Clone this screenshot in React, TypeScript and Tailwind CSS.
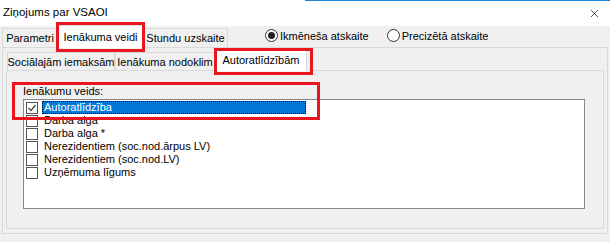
import { X } from "lucide-react"

const items = [
  "Autoratlīdzība",
  "Darba alga",
  "Darba alga *",
  "Nerezidentiem (soc.nod.ārpus LV)",
  "Nerezidentiem (soc.nod.LV)",
  "Uzņēmuma līgums",
]

function Checkbox({ checked }: { checked?: boolean }) {
  return (
    <div className="flex h-[12px] w-[12px] shrink-0 items-center justify-center border border-[#555] bg-white">
      {checked && (
        <svg width="10" height="10" viewBox="0 0 10 10">
          <path d="M1.5 5 L4 7.5 L8.5 2" fill="none" stroke="#444" strokeWidth="1.2" />
        </svg>
      )}
    </div>
  )
}

function Radio({ checked, label }: { checked?: boolean; label: string }) {
  return (
    <div className="flex items-center gap-[2px]">
      <div className="flex h-[13px] w-[13px] items-center justify-center rounded-full border border-[#333] bg-white">
        {checked && <div className="h-[7px] w-[7px] rounded-full bg-[#222]" />}
      </div>
      <span>{label}</span>
    </div>
  )
}

export default function App() {
  return (
    <div className="relative h-[242px] w-[610px] overflow-hidden whitespace-nowrap bg-[#f0f0f0] font-['Liberation_Sans',sans-serif] text-[11px] text-black">
      {/* Title bar */}
      <div className="relative flex h-[26px] items-center justify-between bg-white pl-[3px] pr-[9px]">
        <div className="absolute right-0 top-0 h-px w-[305px] bg-[#1883d7]" />
        <span className="text-[11.5px]">Ziņojums par VSAOI</span>
        <X size={13} strokeWidth={1.2} />
      </div>

      {/* Outer tabs + radio buttons */}
      <div className="relative z-10 flex h-[22px] items-end pl-[2px]">
        <div className="flex h-[20px] w-[56px] items-center justify-center border border-b-0 border-[#d9d9d9]">
          Parametri
        </div>
        <div className="flex h-[23px] w-[85px] items-center justify-center border border-b-0 border-[#d9d9d9] bg-white">
          Ienākuma veidi
        </div>
        <div className="flex h-[20px] w-[85px] items-center justify-center border border-b-0 border-[#d9d9d9]">
          Stundu uzskaite
        </div>
        <div className="mb-[4px] ml-[37px] flex items-center gap-[18px]">
          <Radio checked label="Ikmēneša atskaite" />
          <Radio label="Precizētā atskaite" />
        </div>
      </div>

      {/* Outer tab panel */}
      <div className="mx-[2px] -mt-px h-[187px] border border-[#d9d9d9] pl-[3px] pr-[3px]">
        <div className="relative z-10 flex h-[23px] items-end pl-[1px]">
          <div className="flex h-[19px] w-[108px] items-center justify-center border border-b-0 border-[#d9d9d9]">
            Sociālajām iemaksām
          </div>
          <div className="flex h-[19px] w-[100px] items-center justify-center border border-b-0 border-[#d9d9d9]">
            Ienākuma nodoklim
          </div>
          <div className="flex h-[22px] w-[92px] items-center justify-center border border-b-0 border-[#d9d9d9] bg-white">
            Autoratlīdzībām
          </div>
        </div>

        {/* Inner tab panel */}
        <div className="-mt-px h-[159px] border border-[#d9d9d9] pl-[16px] pt-[14px]">
          <div className="h-[14px] leading-[12px]">Ienākumu veids:</div>
          <div className="h-[110px] w-[562px] border border-[#828790] bg-white pl-[2px] pt-[1px]">
            {items.map((item, i) => (
              <div key={item} className="flex h-[13px] items-center gap-[4px]">
                <Checkbox checked={i === 0} />
                <span
                  className={
                    i === 0
                      ? "flex h-[13px] w-[264px] items-center border border-dotted border-black bg-[#0078d7] pl-[1px] text-white"
                      : "pl-[2px]"
                  }
                >
                  {item}
                </span>
              </div>
            ))}
          </div>
        </div>
      </div>

      {/* Red annotation boxes */}
      <div className="absolute left-[56px] top-[22px] z-20 h-[30px] w-[89px] border-[3px] border-[#e8161f]" />
      <div className="absolute left-[214px] top-[48px] z-20 h-[27px] w-[99px] border-[3px] border-[#e8161f]" />
      <div className="absolute left-[12px] top-[82px] z-20 h-[38px] w-[308px] border-[3px] border-[#e8161f]" />
    </div>
  )
}
